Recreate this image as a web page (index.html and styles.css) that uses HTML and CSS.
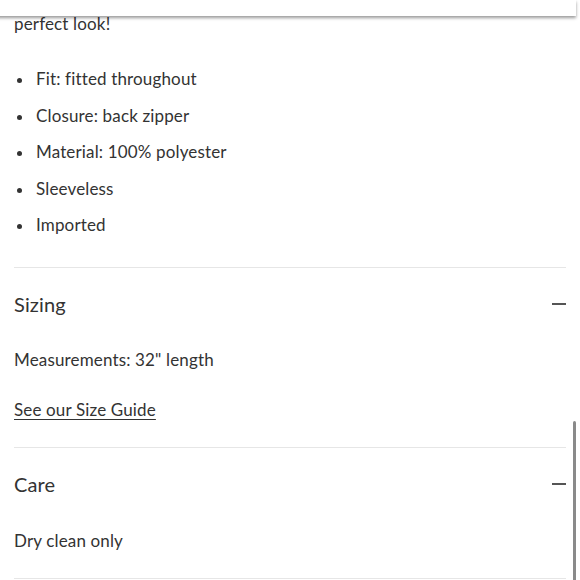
FILE: index.html
```html
<!DOCTYPE html>
<html>
<head>
<meta charset="utf-8">
<link rel="stylesheet" href="styles.css">
</head>
<body>
<div class="topbar"></div>
<main class="content">
  <p class="intro">perfect look!</p>
  <ul class="features">
    <li>Fit: fitted throughout</li>
    <li>Closure: back zipper</li>
    <li>Material: 100% polyester</li>
    <li>Sleeveless</li>
    <li>Imported</li>
  </ul>
  <section class="panel">
    <div class="panel-head"><h2>Sizing</h2><span class="minus"></span></div>
    <p class="panel-text">Measurements: 32" length</p>
    <a class="guide" href="#">See our Size Guide</a>
  </section>
  <section class="panel">
    <div class="panel-head"><h2>Care</h2><span class="minus"></span></div>
    <p class="panel-text last">Dry clean only</p>
  </section>
</main>
<div class="scrollbar"></div>
</body>
</html>
```
FILE: styles.css
```css
html, body {
  margin: 0;
  padding: 0;
  background: #fff;
  overflow: hidden;
}
body {
  font-family: Lato, "Noto Sans", sans-serif;
  font-size: 17px;
  letter-spacing: 0.15px;
  color: #333;
  height: 580px;
}
.topbar {
  position: fixed;
  top: 0;
  left: -10px;
  width: 586px;
  height: 16px;
  background: #fff;
  box-shadow: 0 2px 3px rgba(0,0,0,0.4);
  z-index: 2;
}
.content {
  padding: 12px 14px 0 14px;
}
.intro {
  margin: 0 0 31px 0;
  line-height: 24px;
}
.features {
  list-style: none;
  margin: 0;
  padding: 0;
  display: flex;
  flex-direction: column;
  gap: 12.5px;
  padding-bottom: 30px;
  border-bottom: 1px solid #e6e6e6;
}
.features li {
  line-height: 24px;
  padding-left: 22px;
  position: relative;
}
.features li::before {
  content: "";
  position: absolute;
  left: 3px;
  top: 11px;
  width: 5px;
  height: 5px;
  border-radius: 50%;
  background: #333;
}
.panel {
  border-bottom: 1px solid #e6e6e6;
  padding-top: 22px;
  padding-bottom: 25px;
}
.panel-head {
  display: flex;
  align-items: center;
  justify-content: space-between;
  height: 28px;
}
.panel-head h2 {
  margin: 0;
  font-size: 20px;
  font-weight: 400;
  line-height: 28px;
  color: #333;
}
.minus {
  width: 14px;
  height: 2px;
  background: #555;
}
.panel-text {
  margin: 30px 0 0 0;
  line-height: 24px;
}
.panel-text.last {
  margin-top: 31px;
}
.guide {
  display: block;
  margin-top: 26px;
  line-height: 24px;
  color: #333;
  text-decoration: underline;
  text-underline-offset: 3px;
}
.scrollbar {
  position: fixed;
  right: 4px;
  top: 421px;
  width: 3px;
  height: 170px;
  border-radius: 2px;
  background: #8a8a8a;
}
```
